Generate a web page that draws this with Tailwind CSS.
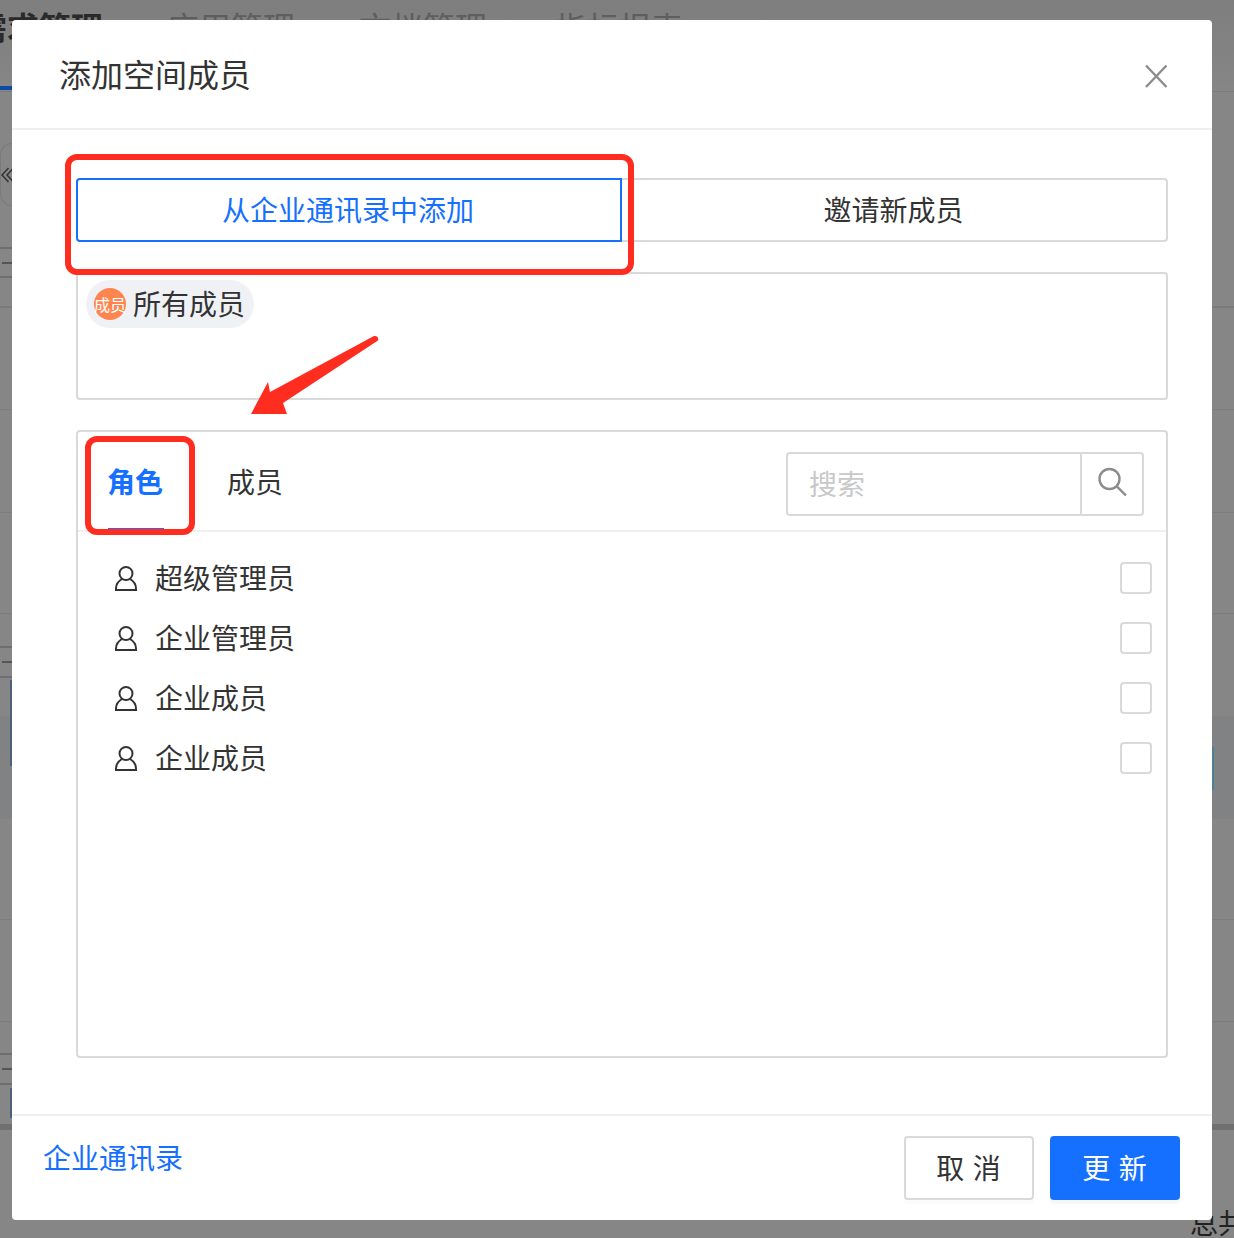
<!DOCTYPE html>
<html lang="zh">
<head>
<meta charset="utf-8">
<script src="https://cdn.jsdelivr.net/npm/@tailwindcss/browser@4"></script>
</head>
<body class="m-0 overflow-hidden">
<div class="relative w-[1234px] h-[1238px] overflow-hidden bg-[#868686] font-['Noto_Sans_CJK_SC','Noto_Sans_CJK_JP',sans-serif] text-[#333]">

  <!-- dimmed page behind the dialog -->
  <div class="flex flex-col w-full h-full text-[#5e5e5e]">
    <div class="relative h-[92px] shrink-0 border-b border-[#7c7c7c] bg-gradient-to-b from-[#7e7e7e] to-[#868686]">
      <div class="flex ml-[-25px] pt-[2px] text-[32px] leading-[48px] gap-[64px] whitespace-nowrap">
        <span class="font-bold text-[#2a2a2a]">需求管理</span>
        <span>应用管理</span>
        <span>文档管理</span>
        <span class="ml-[4px] mr-[-4px]">指标报表</span>
      </div>
      <div class="absolute left-0 top-[86px] w-[12px] h-[4px] bg-[#0d4aa8]"></div>
    </div>
    <div class="h-[114px] shrink-0 pt-[51px]">
      <div class="w-[12px] h-[63px] border-y border-l border-[#7a7a7a] rounded-l-[20px] flex items-center overflow-hidden">
        <svg class="w-[12px] h-[16px] shrink-0 text-[#333]" viewBox="0 0 12 16" fill="none" stroke="currentColor" stroke-width="1.5"><path d="M7.500 1 1 8 7.500 15M12.500 1 6 8 12.500 15"/></svg>
      </div>
    </div>
    <div class="h-[43px] shrink-0"><div class="w-[12px] h-full border-b-2 border-[#6e6e6e]"></div></div>
    <div class="h-[29px] shrink-0"><div class="w-[12px] h-full border-b-2 border-[#6e6e6e] flex items-center"><div class="ml-[2px] w-[10px] h-[2px] bg-[#555]"></div></div></div>
    <div class="h-[30px] shrink-0 border-b-2 border-[#7a7a7a]"></div>
    <div class="h-[102px] shrink-0 border-b border-[#7d7d7d]"></div>
    <div class="h-[103px] shrink-0 border-b border-[#7d7d7d]"></div>
    <div class="h-[101px] shrink-0 border-b border-[#7d7d7d]"></div>
    <div class="h-[34px] shrink-0"><div class="w-[12px] h-full border-b-2 border-[#6e6e6e]"></div></div>
    <div class="h-[30px] shrink-0"><div class="w-[12px] h-full border-b-2 border-[#6e6e6e] flex items-center"><div class="ml-[2px] w-[10px] h-[2px] bg-[#555]"></div></div></div>
    <div class="relative h-[141px] shrink-0 border-b border-[#7d7d7d]">
      <div class="absolute left-0 right-0 top-[38px] h-[103px] bg-[#808283]"></div>
      <div class="absolute left-[10px] top-[2px] w-[2px] h-[86px] bg-[#4f5f7e]"></div>
      <div class="absolute right-[20px] top-[69px] w-[2px] h-[43px] bg-[#4f7f95]"></div>
    </div>
    <div class="h-[101px] shrink-0 border-b border-[#7d7d7d]"></div>
    <div class="h-[102px] shrink-0 border-b border-[#7d7d7d]"></div>
    <div class="h-[33px] shrink-0"><div class="w-[12px] h-full border-b-2 border-[#6e6e6e]"></div></div>
    <div class="h-[30px] shrink-0"><div class="w-[12px] h-full border-b-2 border-[#6e6e6e] flex items-center"><div class="ml-[2px] w-[10px] h-[2px] bg-[#555]"></div></div></div>
    <div class="relative h-[39px] shrink-0"><div class="absolute left-[10px] top-[3px] w-[2px] h-[30px] bg-[#4f5f7e]"></div></div>
    <div class="h-[6px] shrink-0 bg-[#707070]"></div>
    <div class="flex-1 flex justify-end"><span class="mt-[72px] mr-[-12px] text-[28px] leading-[40px] text-[#222] whitespace-nowrap">总共</span></div>
  </div>

  <!-- dialog -->
  <div class="absolute left-[12px] top-[20px] w-[1200px] h-[1200px] bg-white rounded-[4px] flex flex-col">
    <header class="h-[110px] shrink-0 border-b-2 border-[#f0f0f0] flex items-center justify-between pl-[47px] pr-[44px]">
      <h1 class="text-[32px] leading-[44px] font-normal text-[#333] mb-[3px]">添加空间成员</h1>
      <svg class="w-[24px] h-[24px] text-[#8c8c8c] mt-[3px]" viewBox="0 0 24 24" fill="none" stroke="currentColor" stroke-width="2.4"><path d="M2 1.500 22.500 23M22.500 1.500 2 23"/></svg>
    </header>

    <main class="flex-1 flex flex-col pl-[64px] pr-[44px] pt-[48px]">
      <div class="flex h-[64px] shrink-0 text-[28px]">
        <div class="w-[546px] border-2 border-[#1570ff] rounded-l-[4px] text-[#1570ff] flex items-center justify-center z-10 pb-[2px] pr-[2px]">从企业通讯录中添加</div>
        <div class="w-[546px] border-2 border-l-0 border-[#d9d9d9] rounded-r-[4px] flex items-center justify-center pb-[2px] pr-[1px]">邀请新成员</div>
      </div>

      <div class="mt-[30px] h-[128px] shrink-0 border-2 border-[#d9d9d9] rounded-[4px] px-[8px] pt-[6px]">
        <div class="inline-flex items-center h-[48px] w-[168px] rounded-full bg-[#f0f1f5] pl-[8px] gap-[7px]">
          <span class="w-[32px] h-[32px] rounded-full bg-[#ff8550] text-white text-[16px] leading-[32px] text-center whitespace-nowrap">成员</span>
          <span class="text-[28px] leading-[40px] mb-[2px]">所有成员</span>
        </div>
      </div>

      <section class="mt-[30px] h-[628px] shrink-0 border-2 border-[#d9d9d9] rounded-[4px] flex flex-col">
        <div class="h-[100px] shrink-0 border-b-2 border-[#f0f0f0] flex pl-[30px] pr-[22px]">
          <div class="relative w-[56px] h-[98px] flex items-center text-[28px] font-bold text-[#1570ff] pb-[1px] whitespace-nowrap">
            <span class="ml-[-1px]">角色</span>
            <div class="absolute left-0 right-0 bottom-0 h-[2px] bg-[#3f62e0]"></div>
          </div>
          <div class="ml-[63px] w-[57px] h-[98px] flex items-center text-[28px] pb-[1px] whitespace-nowrap">成员</div>
          <div class="ml-auto mt-[20px] w-[358px] h-[64px] border-2 border-[#d9d9d9] rounded-[4px] flex">
            <div class="flex-1 pl-[21px] text-[28px] leading-[58px] text-[#c8c8c8]">搜索</div>
            <div class="w-[62px] border-l-2 border-[#d9d9d9] flex items-center justify-center pb-[4px] pr-[1px]">
              <svg class="w-[30px] h-[30px] text-[#8c8c8c]" viewBox="0 0 30 30" fill="none" stroke="currentColor" stroke-width="2.4"><circle cx="12.500" cy="12" r="10"/><path d="M19.800 19.300 29 28.500"/></svg>
            </div>
          </div>
        </div>

        <ul class="pt-[16px] pl-[36px] pr-[14px] flex flex-col text-[28px]">
          <li class="h-[60px] flex items-center">
            <svg class="w-[24px] h-[26px] mr-[17px] text-[#333]" viewBox="0 0 24 26" fill="none" stroke="currentColor" stroke-width="2"><circle cx="12" cy="8.500" r="6.500"/><path d="M8 14C4.500 16 2 19 2 23.500V25H22V23.500C22 19 19.500 16 16 14"/></svg>
            <span class="flex-1 mb-[2px]">超级管理员</span>
            <span class="w-[32px] h-[32px] border-2 border-[#d9d9d9] rounded-[4px]"></span>
          </li>
          <li class="h-[60px] flex items-center">
            <svg class="w-[24px] h-[26px] mr-[17px] text-[#333]" viewBox="0 0 24 26" fill="none" stroke="currentColor" stroke-width="2"><circle cx="12" cy="8.500" r="6.500"/><path d="M8 14C4.500 16 2 19 2 23.500V25H22V23.500C22 19 19.500 16 16 14"/></svg>
            <span class="flex-1 mb-[2px]">企业管理员</span>
            <span class="w-[32px] h-[32px] border-2 border-[#d9d9d9] rounded-[4px]"></span>
          </li>
          <li class="h-[60px] flex items-center">
            <svg class="w-[24px] h-[26px] mr-[17px] text-[#333]" viewBox="0 0 24 26" fill="none" stroke="currentColor" stroke-width="2"><circle cx="12" cy="8.500" r="6.500"/><path d="M8 14C4.500 16 2 19 2 23.500V25H22V23.500C22 19 19.500 16 16 14"/></svg>
            <span class="flex-1 mb-[2px]">企业成员</span>
            <span class="w-[32px] h-[32px] border-2 border-[#d9d9d9] rounded-[4px]"></span>
          </li>
          <li class="h-[60px] flex items-center">
            <svg class="w-[24px] h-[26px] mr-[17px] text-[#333]" viewBox="0 0 24 26" fill="none" stroke="currentColor" stroke-width="2"><circle cx="12" cy="8.500" r="6.500"/><path d="M8 14C4.500 16 2 19 2 23.500V25H22V23.500C22 19 19.500 16 16 14"/></svg>
            <span class="flex-1 mb-[2px]">企业成员</span>
            <span class="w-[32px] h-[32px] border-2 border-[#d9d9d9] rounded-[4px]"></span>
          </li>
        </ul>
      </section>
    </main>

    <footer class="h-[106px] shrink-0 border-t-2 border-[#f0f0f0] flex items-start justify-between pl-[31px] pr-[32px] pt-[19px]">
      <a class="text-[28px] leading-[44px] text-[#1570ff]">企业通讯录</a>
      <div class="flex gap-[16px] text-[28px] mt-[1px]">
        <button class="w-[130px] h-[64px] border-2 border-[#d9d9d9] rounded-[4px] bg-white text-[#333] whitespace-pre pb-[2px] tracking-[1px] shadow-[0_4px_0_rgba(0,0,0,0.015)]">取 消</button>
        <button class="w-[130px] h-[64px] rounded-[4px] bg-[#1570ff] text-white whitespace-pre pb-[2px] tracking-[1px] shadow-[0_4px_0_rgba(0,0,0,0.03)]">更 新</button>
      </div>
    </footer>
  </div>

  <!-- red annotations -->
  <div class="absolute left-[65px] top-[154px] w-[569px] h-[121px] border-[6px] border-[#ff2d20] rounded-[12px]"></div>
  <div class="absolute left-[85px] top-[436px] w-[110px] h-[99px] border-[6px] border-[#ff2d20] rounded-[12px]"></div>
  <svg class="absolute left-[240px] top-[325px] w-[150px] h-[100px]" viewBox="240 325 150 100" fill="#ff2d20">
    <path d="M251 414 268 382 270 392 373 336.500C376 335 379 337 378 340.500 L283 403 287 414Z"/>
  </svg>
</div>
</body>
</html>
